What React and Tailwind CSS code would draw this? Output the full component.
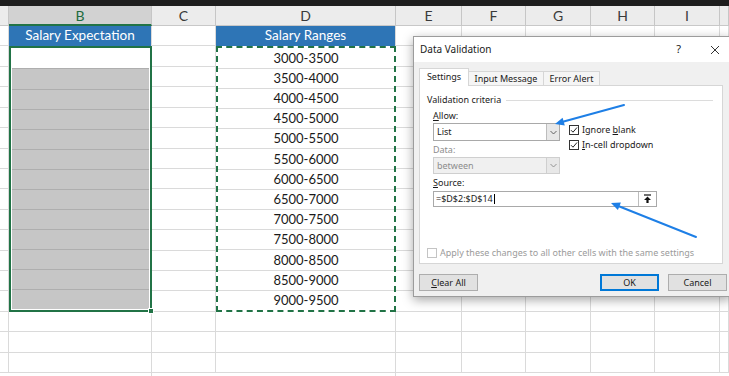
import React from "react";

const RH = "h-[20.43px]";
const ranges = [
  "3000-3500","3500-4000","4000-4500","4500-5000","5000-5500","5500-6000","6000-6500",
  "6500-7000","7000-7500","7500-8000","8000-8500","8500-9000","9000-9500",
];

function Header({ letter, selected }) {
  return selected ? (
    <div className="h-[20px] shrink-0 bg-[#d2d2d2] border-b-2 border-[#217346] border-r border-r-[#c6c6c6] flex items-center justify-center text-[14px] text-[#1d6b3e]">
      {letter}
    </div>
  ) : (
    <div className="h-[20px] shrink-0 bg-[#ececec] border-b border-[#c8c8c8] border-r border-r-[#c6c6c6] flex items-center justify-center text-[14px] text-[#3a3a3a]">
      {letter}
    </div>
  );
}

function Empty({ n }) {
  return Array.from({ length: n }).map((_, i) => (
    <div key={i} className={`${RH} shrink-0 border-b border-r border-[#dadada]`} />
  ));
}

function Col({ w, letter, children, rest }) {
  return (
    <div className={`${w} ${rest ? "flex-1" : "shrink-0"} flex flex-col`}>
      <Header letter={letter} />
      {children}
    </div>
  );
}

function Check({ checked }) {
  return (
    <div className="w-[10px] h-[10px] border border-[#333] bg-white flex items-center justify-center shrink-0">
      {checked && (
        <svg width="8" height="8" viewBox="0 0 8 8">
          <path d="M1 4.2 L3 6.2 L7 1.5" fill="none" stroke="#222" strokeWidth="1" />
        </svg>
      )}
    </div>
  );
}

function Chevron({ color = "#555" }) {
  return (
    <svg width="7" height="5" viewBox="0 0 7 5">
      <path d="M0.5 1 L3.5 4 L6.5 1" fill="none" stroke={color} strokeWidth="0.9" />
    </svg>
  );
}

export default function App() {
  return (
    <div className="relative w-[729px] h-[376px] overflow-hidden bg-white">
      <div className="h-[6px] bg-[#1e1e1e]" />
      <div className="flex" style={{ fontFamily: "Lato, 'Liberation Sans', sans-serif" }}>
        <Col w="w-[9px]" letter="">
          <Empty n={17} />
        </Col>
        <div className="w-[143px] shrink-0 flex flex-col">
          <Header letter="B" selected />
          <div className={`${RH} shrink-0 bg-[#2e75b6] text-white text-[13.5px] leading-none flex items-center justify-center border-r border-[#dadada]`}>
            Salary Expectation
          </div>
          <div className="relative h-[265.6px] shrink-0 border-2 border-[#217346] p-px flex flex-col bg-white">
            <div className="flex-1 min-h-0 bg-white" />
            {Array.from({ length: 12 }).map((_, i) => (
              <div key={i} className="flex-1 min-h-0 bg-[#c6c6c6] border-t border-[#aeaeae]" />
            ))}
            <div className="absolute -right-[4px] -bottom-[4px] w-[6px] h-[6px] bg-[#217346] border border-white" />
          </div>
          <Empty n={4} />
        </div>
        <Col w="w-[64px]" letter="C">
          <Empty n={17} />
        </Col>
        <div className="w-[180px] shrink-0 flex flex-col">
          <Header letter="D" />
          <div className={`${RH} shrink-0 bg-[#2e75b6] text-white text-[13.5px] leading-none flex items-center justify-center border-r border-[#dadada]`}>
            Salary Ranges
          </div>
          <div className="h-[265.6px] shrink-0 border-2 border-dashed border-[#217346] flex flex-col">
            {ranges.map((r, i) => (
              <div
                key={r}
                className={`flex-1 min-h-0 leading-none flex items-center justify-center text-[13px] text-[#1a1a1a] ${i < 12 ? "border-b border-[#dadada]" : ""}`}
              >
                {r}
              </div>
            ))}
          </div>
          <Empty n={4} />
        </div>
        <Col w="w-[66px]" letter="E"><Empty n={17} /></Col>
        <Col w="w-[64px]" letter="F"><Empty n={17} /></Col>
        <Col w="w-[65px]" letter="G"><Empty n={17} /></Col>
        <Col w="w-[64px]" letter="H"><Empty n={17} /></Col>
        <Col w="w-[65px]" letter="I"><Empty n={17} /></Col>
        <Col w="w-[40px]" letter="" rest><Empty n={17} /></Col>
      </div>

      {/* Dialog */}
      <div
        className="absolute left-[413px] top-[36px] w-[318px] h-[261px] bg-[#f0f0f0] border border-[#9c9c9c] shadow-[0_3px_10px_rgba(0,0,0,0.35)] flex flex-col text-[9px] text-[#1a1a1a]"
        style={{ fontFamily: "'Noto Sans', 'Open Sans', sans-serif" }}
      >
        <div className="h-[25px] shrink-0 bg-white flex items-center pl-[6px] pr-[10px] text-[10px]">
          <span>Data Validation</span>
          <span className="ml-auto mr-[29px] text-[11px]">?</span>
          <svg width="10" height="10" viewBox="0 0 10 10">
            <path d="M1 1 L9 9 M9 1 L1 9" stroke="#333" strokeWidth="1" />
          </svg>
        </div>

        <div className="flex items-end pl-[5px] mt-[5px] h-[18px] relative z-10">
          <div className="w-[50px] h-[18px] bg-white border border-b-0 border-[#d6d6d6] flex items-center justify-center -mb-px pb-px">
            Settings
          </div>
          <div className="w-[75px] h-[14px] border-t border-r border-[#d6d6d6] flex items-center justify-center bg-[#f5f5f5]">
            Input Message
          </div>
          <div className="w-[56px] h-[14px] border-t border-r border-[#d6d6d6] flex items-center justify-center bg-[#f5f5f5]">
            Error Alert
          </div>
        </div>

        <div className="ml-[5px] w-[304px] h-[179px] shrink-0 bg-white border border-[#d6d6d6] px-[7px] pt-[8px] flex flex-col">
          <div className="flex items-center h-[12px] gap-[5px] pr-[2px]">
            <span>Validation criteria</span>
            <div className="flex-1 h-px bg-[#dcdcdc]" />
          </div>

          <div className="flex pl-[6px] mt-[4px]">
            <div className="w-[127px] flex flex-col">
              <div className="h-[12px] flex items-center"><span><u>A</u>llow:</span></div>
              <div className="mt-[1px] h-[18px] border border-[#a9a9a9] bg-white flex items-center">
                <span className="pl-[3px] flex-1">List</span>
                <div className="w-[13px] h-full border-l border-[#bdbdbd] bg-[#e8e8e8] flex items-center justify-center">
                  <Chevron />
                </div>
              </div>
              <div className="mt-[3px] h-[12px] flex items-center text-[#8d8d8d]">Data:</div>
              <div className="mt-[1px] h-[17px] border border-[#cfcfcf] bg-[#f0f0f0] flex items-center text-[#8d8d8d]">
                <span className="pl-[3px] flex-1">between</span>
                <div className="w-[13px] h-full border-l border-[#cfcfcf] bg-[#e8e8e8] flex items-center justify-center">
                  <Chevron color="#8a8a8a" />
                </div>
              </div>
            </div>
            <div className="ml-[9px] flex flex-col pt-[15px] gap-[5px]">
              <div className="flex items-center gap-[3px] h-[10px]">
                <Check checked />
                <span>Ignore <u>b</u>lank</span>
              </div>
              <div className="flex items-center gap-[3px] h-[10px]">
                <Check checked />
                <span><u>I</u>n-cell dropdown</span>
              </div>
            </div>
          </div>

          <div className="pl-[6px] mt-[3px] h-[12px] flex items-center"><span><u>S</u>ource:</span></div>
          <div className="ml-[6px] mt-[2px] w-[224px] h-[16px] border border-[#a9a9a9] bg-white flex items-center">
            <span className="pl-[2px]">=$D$2:$D$14</span>
            <div className="w-px h-[10px] bg-black ml-px" />
            <div className="ml-auto w-[18px] h-full border-l border-[#bdbdbd] flex items-center justify-center">
              <svg width="9" height="10" viewBox="0 0 9 10">
                <path d="M1 1 H8" stroke="#111" strokeWidth="1.2" />
                <path d="M4.5 2.5 L8 6 H5.6 V9 H3.4 V6 H1 Z" fill="#111" />
              </svg>
            </div>
          </div>

          <div className="mt-[40px] h-[12px] flex items-center gap-[3px] text-[#9b9b9b]">
            <div className="w-[10px] h-[10px] border border-[#c4c4c4] bg-white" />
            <span>Apply these changes to all other cells with the same settings</span>
          </div>
        </div>

        <div className="flex mt-[10px] pl-[5px] pr-[3px]">
          <div className="w-[59px] h-[17px] bg-[#e1e1e1] border border-[#adadad] flex items-center justify-center">
            <span><u>C</u>lear All</span>
          </div>
          <div className="ml-auto w-[59px] h-[17px] bg-[#e1e1e1] border-2 border-[#0078d7] flex items-center justify-center">
            OK
          </div>
          <div className="ml-[9px] w-[59px] h-[17px] bg-[#e1e1e1] border border-[#adadad] flex items-center justify-center">
            Cancel
          </div>
        </div>
      </div>

      {/* annotation arrows */}
      <svg className="absolute inset-0 pointer-events-none" width="729" height="376" viewBox="0 0 729 376">
        <line x1="624" y1="105" x2="561" y2="122.3" stroke="#1e7fe6" strokeWidth="2" strokeLinecap="round" />
        <polygon points="555,124 564.8,125.5 562.6,117.7" fill="#1e7fe6" />
        <line x1="696" y1="237" x2="617" y2="205.5" stroke="#1e7fe6" strokeWidth="2" strokeLinecap="round" />
        <polygon points="611,203 620.9,202.6 617.9,210" fill="#1e7fe6" />
      </svg>
    </div>
  );
}
